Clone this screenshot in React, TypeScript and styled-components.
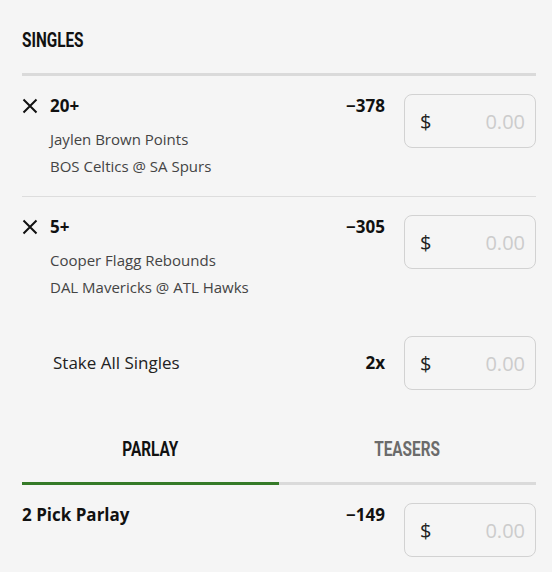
import React from 'react';
import styled, { createGlobalStyle } from 'styled-components';

const GlobalStyle = createGlobalStyle`
    html, body {
        margin:0;
        padding:0;
        background:#f5f5f5;
    }
    body {
        font-family:"Open Sans", "Liberation Sans", sans-serif;
        color:#111111;
    }
`

type Selection = {
    line:string;
    odds:string;
    market:string;
    event:string;
}

const selections:Selection[] = [
    {line:'20+', odds:'−378', market:'Jaylen Brown Points', event:'BOS Celtics @ SA Spurs'},
    {line:'5+', odds:'−305', market:'Cooper Flagg Rebounds', event:'DAL Mavericks @ ATL Hawks'},
]

const Slip = styled.div`
    width:514px;
    margin-left:22px;
`

const Header = styled.div`
    box-sizing:border-box;
    height:76px;
    padding-top:30px;
    border-bottom:3px solid #dadada;
`

const Condensed = styled.span<{active?:boolean}>`
    display:inline-block;
    font-family:Roboto, "Liberation Sans", sans-serif;
    font-weight:700;
    font-size:21px;
    line-height:20px;
    text-transform:uppercase;
    transform:scaleX(0.73);
    transform-origin:left center;
    color:${({active})=>active===false ? '#6b6b6b' : '#111111'};
`

const Row = styled.div<{last?:boolean}>`
    box-sizing:border-box;
    height:121px;
    padding-top:18px;
    display:flex;
    align-items:flex-start;
    border-bottom:1px solid ${({last})=>last ? 'transparent' : '#dddddd'};
`

const Remove = styled.button`
    border:none;
    background:transparent;
    padding:0;
    width:28px;
    height:24px;
    display:flex;
    align-items:center;
    cursor:pointer;
`

const Info = styled.div`
    flex:1;
`

const Title = styled.div`
    font-weight:700;
    font-size:17px;
    line-height:24px;
`

const Details = styled.div`
    margin-top:8px;
    font-size:15px;
    line-height:27px;
    color:#444444;
`

const Odds = styled.div`
    font-weight:700;
    font-size:17px;
    line-height:24px;
    margin-right:19px;
`

const StakeBox = styled.label`
    box-sizing:border-box;
    width:132px;
    height:54px;
    border:1px solid #d2d2d2;
    border-radius:8px;
    display:flex;
    align-items:center;
    padding:0 10px 0 15px;
    font-size:20px;
    flex-shrink:0;
`

const Dollar = styled.span`
    color:#222222;
`

const Amount = styled.span`
    flex:1;
    text-align:right;
    color:#cccccc;
`

const StakeAll = styled.div`
    box-sizing:border-box;
    height:90px;
    padding:18px 0;
    display:flex;
    align-items:center;
`

const StakeLabel = styled.div`
    flex:1;
    padding-left:31px;
    font-size:17px;
    line-height:24px;
    color:#222222;
`

const Multiplier = styled(Odds)`
    line-height:54px;
`

const Tabs = styled.div`
    display:flex;
`

const Tab = styled.div<{active?:boolean}>`
    flex:1;
    box-sizing:border-box;
    height:77px;
    padding-top:31px;
    text-align:center;
    border-bottom:3px solid ${({active})=>active ? '#357a28' : '#dadada'};
    & > span {
        transform-origin:center;
    }
`

const ParlayRow = styled.div`
    padding-top:18px;
    display:flex;
    align-items:flex-start;
`

const ParlayTitle = styled(Title)`
    flex:1;
`

const CloseIcon = () => (
    <svg width="16" height="16" viewBox="0 0 16 16">
        <path d="M1.5 1.5 L14.5 14.5 M14.5 1.5 L1.5 14.5" stroke="#111" strokeWidth="2" fill="none" />
    </svg>
)

const Stake = () => (
    <StakeBox>
        <Dollar>$</Dollar>
        <Amount>0.00</Amount>
    </StakeBox>
)

const App = () => {
    return (
        <Slip>
            <GlobalStyle />
            <Header><Condensed>Singles</Condensed></Header>
            {selections.map((s,i)=>(
                <Row key={s.market} last={i===selections.length-1}>
                    <Remove aria-label="Remove"><CloseIcon /></Remove>
                    <Info>
                        <Title>{s.line}</Title>
                        <Details>
                            <div>{s.market}</div>
                            <div>{s.event}</div>
                        </Details>
                    </Info>
                    <Odds>{s.odds}</Odds>
                    <Stake />
                </Row>
            ))}
            <StakeAll>
                <StakeLabel>Stake All Singles</StakeLabel>
                <Multiplier>2x</Multiplier>
                <Stake />
            </StakeAll>
            <Tabs>
                <Tab active><Condensed>Parlay</Condensed></Tab>
                <Tab><Condensed active={false}>Teasers</Condensed></Tab>
            </Tabs>
            <ParlayRow>
                <ParlayTitle>2 Pick Parlay</ParlayTitle>
                <Odds>−149</Odds>
                <Stake />
            </ParlayRow>
        </Slip>
    )
}

export default App
